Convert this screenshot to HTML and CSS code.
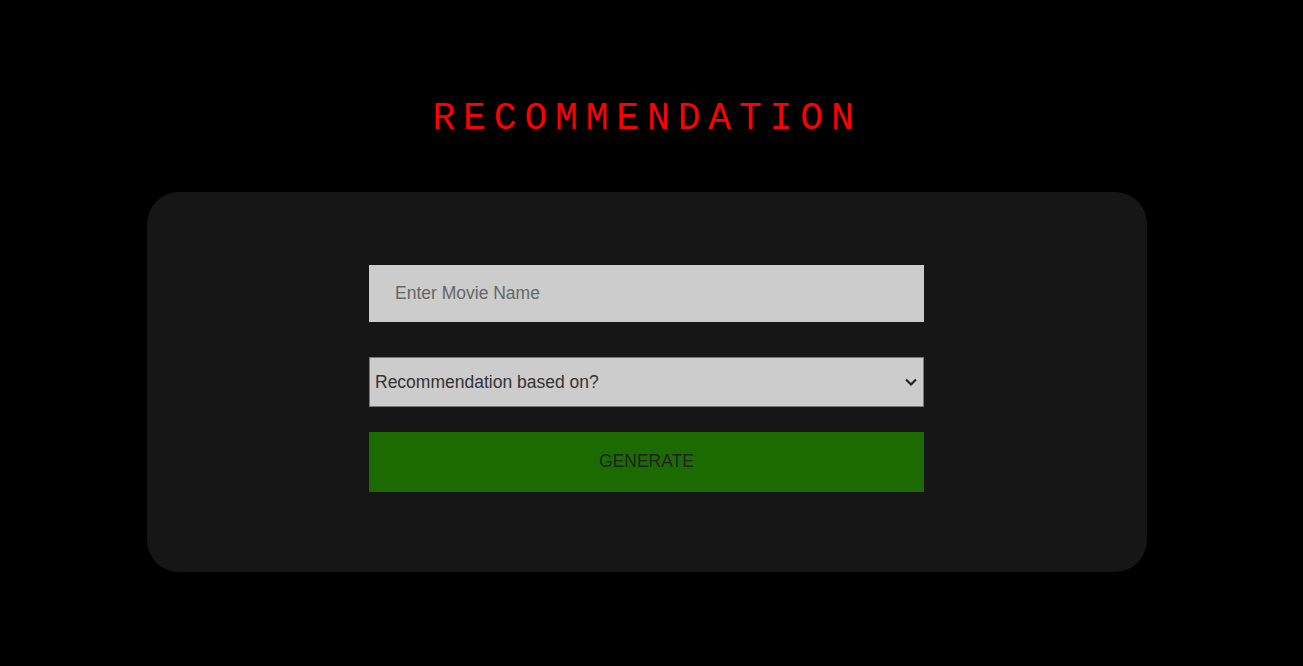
FILE: index.html
```html
<!DOCTYPE html>
<html>
<head>
<meta charset="utf-8">
<link rel="stylesheet" href="styles.css">
</head>
<body>
<main class="page">
  <h1 class="title">RECOMMENDATION</h1>
  <section class="card">
    <form class="form">
      <input class="field" type="text" placeholder="Enter Movie Name">
      <div class="select-wrap">
        <select class="choice">
          <option>Recommendation based on?</option>
          <option>Genre</option>
          <option>Cast</option>
        </select>
        <svg class="chev" width="14" height="10" viewBox="0 0 14 10" aria-hidden="true">
          <path d="M2 2.5 L7 7.5 L12 2.5" fill="none" stroke="#222" stroke-width="2.2"/>
        </svg>
      </div>
      <button class="btn" type="button">GENERATE</button>
    </form>
  </section>
</main>
</body>
</html>
```

FILE: styles.css
```css
html, body {
  margin: 0;
  background: #000;
  font-family: "Liberation Sans", Arial, sans-serif;
}
.page {
  padding: 97px 10px 0 0;
  display: flex;
  flex-direction: column;
  align-items: center;
}
.title {
  margin: 0;
  font-family: "Liberation Mono", "Courier New", monospace;
  font-weight: normal;
  font-size: 38px;
  line-height: 43px;
  letter-spacing: 7.85px;
  color: #f00;
  padding-left: 1px;
}
.card {
  margin-top: 52px;
  width: 1000px;
  height: 380px;
  box-sizing: border-box;
  background: #161616;
  border-radius: 32px;
  display: flex;
  justify-content: center;
  padding-top: 73px;
}
.form {
  width: 555px;
  display: flex;
  flex-direction: column;
}
.field {
  height: 57px;
  box-sizing: border-box;
  border: none;
  outline: none;
  background: #cccccc;
  padding: 0 26px;
  font-family: "Liberation Sans", Arial, sans-serif;
  font-size: 17.5px;
  color: #333;
}
.field::placeholder {
  color: #666;
}
.select-wrap {
  margin-top: 35px;
  position: relative;
  display: flex;
}
.choice {
  flex: 1;
  -webkit-appearance: none;
  appearance: none;
  height: 50px;
  box-sizing: border-box;
  border: 1px solid #767676;
  background: #cccccc;
  padding: 0 30px 0 5px;
  font-family: "Liberation Sans", Arial, sans-serif;
  font-size: 17.5px;
  color: #333;
  border-radius: 0;
  outline: none;
}
.chev {
  position: absolute;
  right: 6px;
  top: 20px;
  pointer-events: none;
}
.btn {
  margin-top: 25px;
  height: 60px;
  border: none;
  background: #1b6b00;
  color: #222;
  font-family: "Liberation Sans", Arial, sans-serif;
  font-size: 17.5px;
  padding: 0 0 2px;
}
```
